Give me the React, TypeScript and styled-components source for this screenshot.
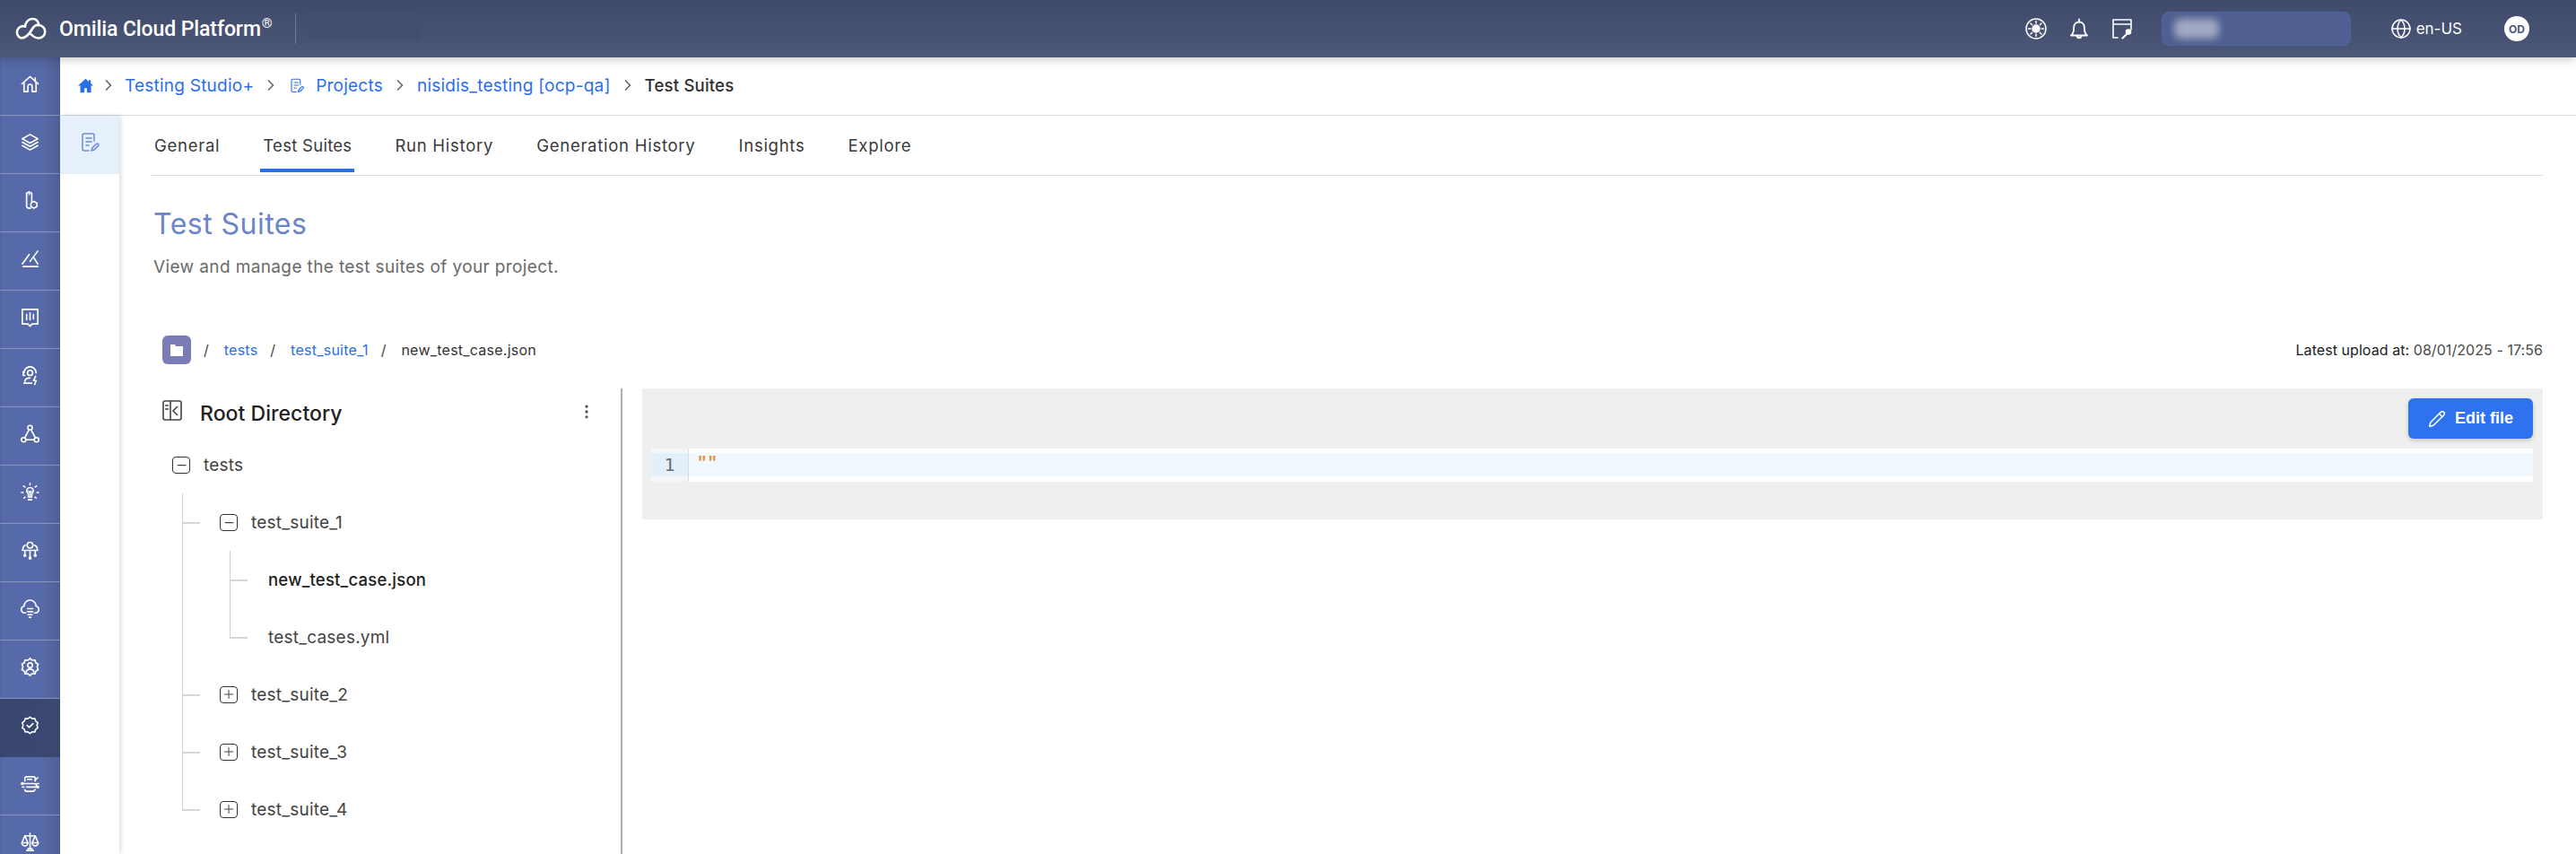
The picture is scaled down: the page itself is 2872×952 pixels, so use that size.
import React from 'react';
import styled, { createGlobalStyle } from 'styled-components';
import { ChevronRight, Globe, Pencil, MoreVertical, Minus, Plus } from 'lucide-react';

const Global = createGlobalStyle`
  * { box-sizing: border-box; }
  html, body { margin: 0; padding: 0; height: 100%; background: #fff; }
  body { font-family: Inter, "Open Sans", sans-serif; color: #333; }
  #root { height: 100%; }
`;

const Shell = styled.div`
  height: 100vh; display: flex; flex-direction: column; overflow: hidden;
`;
const TopBar = styled.header`
  height: 64px; flex: none; display: flex; align-items: center; position: relative; z-index: 3;
  background: linear-gradient(180deg, #404a6a 0%, #4c5779 100%);
  box-shadow: 0 2px 10px rgba(0,0,0,.22);
  color: #fff;
`;
const Logo = styled.svg`
  width: 38px; height: 26px; margin-left: 15px; flex: none;
`;
const Brand = styled.div`
  margin-left: 13px; font-family: Roboto, sans-serif; font-weight: 500; font-size: 23px; letter-spacing: -.1px; white-space: nowrap; color: #fff;
  sup { font-size: 15px; font-weight: 400; line-height: 0; vertical-align: 9px; margin-left: 1px; }
`;
const BrandDivider = styled.div`
  width: 1px; height: 34px; background: #6f7ba6; margin-left: 25px; flex: none;
`;
const BlurredTenant = styled.div`
  width: 124px; height: 34px; margin-left: 15px; margin-top: -10px; background: #434e71; filter: blur(1px);
`;
const TopActions = styled.div`
  margin-left: auto; display: flex; align-items: center; padding-right: 52px;
`;
const TopIcon = styled.span`
  width: 24px; height: 24px; display: flex; align-items: center; justify-content: center; margin-right: 24px;
  svg { display: block; }
`;
const Search = styled.div`
  width: 211px; height: 38px; border-radius: 8px; background: #4f5f91; border: 1px solid #4d64a2; margin-left: 8px; padding: 6px 13px; flex: none; overflow: hidden;
`;
const BlurBlob = styled.div`
  width: 50px; height: 22px; margin-top: 1px; background: #a3a9c2; border-radius: 8px; filter: blur(4px);
`;
const Lang = styled.div`
  display: flex; align-items: center; gap: 5px; margin-left: 44px; font-size: 17px; color: #fff;
`;
const Avatar = styled.div`
  width: 28px; height: 28px; border-radius: 50%; background: #fff; color: #4c5779; font-size: 12px; font-weight: 700; display: flex; align-items: center; justify-content: center; margin-left: 47px; flex: none;
`;
const Body = styled.div`
  flex: 1; min-height: 0; display: flex;
`;
const SideBar = styled.nav`
  width: 67px; flex: none; background: linear-gradient(90deg, #4d629c 0, #5669a8 3%, #5669a8 72%, #505e94 100%); overflow: hidden;
`;
const NavItem = styled.div<{ $active?: boolean }>`
  height: 65px; display: flex; align-items: center; justify-content: center; padding-bottom: 6px;
  border-bottom: 1px solid ${p => (p.$active ? '#384670' : 'rgba(255,255,255,.3)')};
  background: ${p => (p.$active ? 'linear-gradient(90deg,#37456f,#3a4872)' : 'transparent')};
  svg { width: 23px; height: 23px; fill: none; stroke: #fff; stroke-width: 1.7; stroke-linecap: round; stroke-linejoin: round; }
`;
const Main = styled.div`
  flex: 1; min-width: 0; display: flex; flex-direction: column;
`;
const Crumbs = styled.div`
  height: 65px; flex: none; display: flex; align-items: center; border-bottom: 1px solid #d9d9d9; padding-left: 20px; font-size: 19px; color: #2b6fe8; padding-bottom: 2px; white-space: nowrap;
`;
const CrumbLink = styled.span`
  font-weight: 400; letter-spacing: .012em; color: #2b6fe8;
`;
const CrumbCurrent = styled.span`
  font-weight: 500; color: #2f2f2f; font-size: 18.5px; letter-spacing: .012em;
`;
const CrumbSep = styled.span<{ $first?: boolean }>`
  display: flex; color: #666; margin: 0 ${p => (p.$first ? 8 : 9)}px 0 ${p => (p.$first ? 7 : 9)}px;
`;
const CrumbDoc = styled.svg`
  width: 18px; height: 22px; margin-right: 12px; margin-left: 1px; fill: none; stroke: #2b6fe8; stroke-width: 1.5; stroke-linecap: round; stroke-linejoin: round;
`;
const Work = styled.div`
  flex: 1; min-height: 0; display: flex;
`;
const SubNav = styled.aside`
  width: 66px; flex: none; position: relative; z-index: 1; background: #fff; box-shadow: 2px 0 5px rgba(0,0,0,.13);
`;
const SubNavItem = styled.div`
  height: 65px; background: #e6f0fb; border-bottom: 1px solid #e4ecf6; display: flex; align-items: center; justify-content: center; padding-bottom: 6px;
`;
const SubIcon = styled.svg`
  width: 24px; height: 24px; fill: none; stroke: #6d8ad4; stroke-width: 1.5; stroke-linecap: round; stroke-linejoin: round;
`;
const Content = styled.main`
  flex: 1; min-width: 0; padding: 0 37px 0 38px; display: flex; flex-direction: column;
`;
const Tabs = styled.div`
  height: 67px; flex: none; display: flex; gap: 42px; border-bottom: 1px solid #dedede; padding-bottom: 3px; padding-left: 0; margin-left: -2px;
`;
const Tab = styled.div<{ $active?: boolean }>`
  height: 100%; padding: 6px 3px 0; display: flex; align-items: center; font-size: 18.5px; color: #3a3a3a; white-space: nowrap;
  letter-spacing: ${p => (p.$active ? '.015em' : '.04em')};
  border-bottom: 4px solid ${p => (p.$active ? '#2b6fe8' : 'transparent')};
`;
const Title = styled.h1`
  margin: 34px 0 0; font-size: 32px; line-height: 40px; font-weight: 400; color: #6b85c8; letter-spacing: .015em;
`;
const Subtitle = styled.p`
  margin: 16px 0 0; font-size: 19px; line-height: 24px; color: #6a6a6a; letter-spacing: .02em;
`;
const PathRow = styled.div`
  margin: 64px 0 0; padding-left: 10px; height: 32px; flex: none; display: flex; align-items: center; font-size: 16px; white-space: nowrap;
`;
const FolderBtn = styled.div`
  width: 32px; height: 32px; border-radius: 6px; background: #7b7bb5; display: flex; align-items: center; justify-content: center; flex: none;
`;
const PathSlash = styled.span`
  margin: 0 17px 0 14px; color: #444;
`;
const PathLink = styled.span`
  color: #2b6fe8; letter-spacing: .015em;
`;
const PathCurrent = styled.span`
  color: #333; letter-spacing: .015em;
`;
const Upload = styled.div`
  margin-left: auto; font-size: 16px; color: #1c1c1c; letter-spacing: .004em;
  span { color: #4a4a4a; }
`;
const Split = styled.div`
  flex: 1; min-height: 0; margin-top: 27px; display: flex;
`;
const TreePane = styled.section`
  width: 523px; flex: none; border-right: 2px solid #adadad; padding-left: 10px;
`;
const TreeHead = styled.div`
  height: 53px; display: flex; align-items: flex-start; padding-top: 12px;
`;
const PanelIcon = styled.svg`
  width: 22px; height: 23px; flex: none; margin-top: 1px; fill: none; stroke: #444; stroke-width: 1.6;
`;
const RootTitle = styled.div`
  margin-left: 20px; margin-top: 2px; font-size: 23px; font-weight: 500; color: #222; letter-spacing: .002em;
`;
const Kebab = styled.span`
  margin-left: auto; margin-right: 28px; margin-top: 4px; color: #555; display: flex;
`;
const Tree = styled.ul`
  list-style: none; margin: 0; padding: 0 0 0 11px;
`;
const Branch = styled.ul<{ $leaf?: boolean }>`
  list-style: none; margin: 0 0 0 11px; padding: 0 0 0 ${p => (p.$leaf ? 43 : 42)}px;
`;
const Node = styled.li<{ $connected?: boolean }>`
  position: relative;
  ${p => p.$connected ? `
    &::before { content: ''; position: absolute; left: -42px; top: 32px; width: 20px; height: 2px; background: #d6d6d6; }
    &::after { content: ''; position: absolute; left: -42px; top: 0; bottom: 0; width: 1px; background: #cfcfcf; }
    &:last-child::after { bottom: auto; height: 34px; }
  ` : ''}
`;
const LeafNode = styled.li`
  position: relative;
  &::before { content: ''; position: absolute; left: -43px; top: 32px; width: 20px; height: 2px; background: #d6d6d6; }
  &::after { content: ''; position: absolute; left: -43px; top: 0; bottom: 0; width: 1px; background: #cfcfcf; }
  &:last-child::after { bottom: auto; height: 34px; }
`;
const Row = styled.div`
  height: 64px; display: flex; align-items: center; gap: 15px;
`;
const Toggle = styled.span`
  width: 20px; height: 19px; border: 1px solid #333; border-radius: 4px; display: flex; align-items: center; justify-content: center; flex: none; color: #444;
`;
const NodeLabel = styled.span<{ $strong?: boolean }>`
  font-size: ${p => (p.$strong ? 18.5 : 19)}px; color: ${p => (p.$strong ? '#222' : '#444')}; font-weight: ${p => (p.$strong ? 500 : 400)}; letter-spacing: .012em;
`;
const EditorPane = styled.section`
  flex: 1; min-width: 0; margin-left: 22px; height: 146px; background: #efefef; padding: 11px 11px 0 10px; display: flex; flex-direction: column;
`;
const EditBar = styled.div`
  display: flex; justify-content: flex-end; height: 56px; flex: none;
`;
const EditBtn = styled.button`
  width: 139px; height: 45px; border: 0; border-radius: 6px; background: #2e72f0; color: #fff; font-family: "Liberation Sans", Arial, sans-serif; font-weight: 700; font-size: 18px; display: flex; align-items: center; justify-content: center; gap: 10px; box-shadow: 0 2px 5px rgba(0,0,0,.18);
`;
const Code = styled.div`
  height: 37px; display: flex; background: #fff;
`;
const Gutter = styled.div`
  width: 42px; flex: none; background: #f5f5f5; border-right: 1px solid #dcdcdc; padding: 5px 0;
`;
const GutterNum = styled.div`
  height: 26px; line-height: 26px; background: #e3f0fc; color: #6b6b6b; font-family: "DejaVu Sans Mono", monospace; font-size: 20px; text-align: center;
`;
const CodeArea = styled.div`
  flex: 1; padding: 5px 0;
`;
const CodeLine = styled.div`
  height: 26px; line-height: 22px; background: #f1f8fe; color: #e5923a; font-family: "Liberation Mono", monospace; font-weight: 700; font-size: 19px; padding-left: 9px;
`;

const icons: React.ReactNode[] = [
  <><path d="M2.5 12 12 3.500 21.500 12" /><path d="M18 5v4" /><path d="M5 10.500V21h4.500v-6a2.500 2.500 0 0 1 5 0v6H19V10.500" /></>,
  <><path d="M12 3 21 8l-9 5-9-5z" /><path d="m3 12 9 5 9-5" /><path d="m3 16 9 5 9-5" /></>,
  <><path d="M8 3.500 11 2l3 1.500V13" /><path d="M8 3.500V18a3 3 0 0 0 3 3h1.500" /><path d="M11 2v3" /><path d="m16.500 13 3.500 2v4l-3.500 2-3.500-2v-4z" /></>,
  <><path d="M3 18 11 7" /><path d="M21 3 12 15" /><path d="m16 10 5 8" /><path d="M4 21h17" /></>,
  <><path d="M3 3h18v17h-6.500L12 22.500 9.500 20H3z" /><path d="M8 9v6M12 7v8M16 9v5" /></>,
  <><path d="M5 9a7 7 0 0 1 14 0" /><circle cx="12" cy="9" r="3" /><path d="M4 8v4h2M6 19c0-3 3-4 6-4M5 21h9" /><path d="m18.500 13-2.500 5h3l-1.500 4.500" /></>,
  <><circle cx="12" cy="5" r="2.600" /><circle cx="4.500" cy="19" r="2.600" /><circle cx="19.500" cy="19" r="2.600" /><path d="M10.800 7.500 5.800 16.700M13.200 7.500l5 9.200M7 19h10" /></>,
  <><path d="M8.500 12a3.800 3.800 0 1 1 7 0c-.6 1-1.500 1.600-1.500 3v3h-4v-3c0-1.400-.9-2-1.500-3z" /><path d="M10 21h4M12 18v-5l-1.500-2M12 13l1.500-2" /><path d="M12 2v1.500M4.500 5 6 6.200M19.500 5 18 6.200M2 12.500h2M20 12.500h2M5 19l1.200-1.200M19 19l-1.200-1.200" /></>,
  <><circle cx="12" cy="6" r="3.400" /><path d="M6.500 6c-2 1-3 3-3 5M17.500 6c2 1 3 3 3 5M3 12h18" /><path d="M6 12v5M12 12v8M18 12v5" /><circle cx="6" cy="18" r="1" /><circle cx="12" cy="21" r="1" /><circle cx="18" cy="18" r="1" /></>,
  <><path d="M7 17H6a4 4 0 0 1-1-7.900 7 7 0 0 1 14 0A4 4 0 0 1 18 17h-1" /><path d="M9 12h6M9 15.500h6M9.500 19h5M11 22h2" /></>,
  <><path d="m12 2 2.500 2.200 3.300-.3.800 3.200 2.900 1.700-1.300 3.200 1.300 3.200-2.900 1.700-.8 3.200-3.300-.3L12 22l-2.500-2.200-3.300.3-.8-3.200-2.900-1.700L3.800 12l-1.300-3.200 2.900-1.700.8-3.200 3.300.3z" /><circle cx="12" cy="10" r="2.800" /><path d="M7.500 18c.5-2.500 2.500-3.500 4.500-3.500s4 1 4.500 3.500" /></>,
  <><path d="m12 2.500 2.500 1.800 3.100-.1 1 3 2.400 1.900-1 2.900 1 2.900-2.400 1.900-1 3-3.100-.1L12 21.500l-2.500-1.800-3.100.1-1-3-2.400-1.900 1-2.900-1-2.900 2.400-1.900 1-3 3.100.1z" /><path d="m8.500 12 2.500 2.500 4.500-4.500" /></>,
  <><path d="M6 9V6a2 2 0 0 1 2-2h8a2 2 0 0 1 2 2v3" /><path d="M9 7h5M3 12h14a2.500 2.500 0 0 1 2.500 2.500V16H8" /><path d="M21 5l-3 3M3 16h2M6 19a2 2 0 0 0 2 2h8l2-2M22 12h-2" /><circle cx="3" cy="12" r="1" /><circle cx="21" cy="16" r="1" /></>,
  <><path d="M12 2v18M6 5h12M8 22h8M9.500 20h5" /><path d="m6 5-3.500 8h7zM18 5l-3.500 8h7z" /><path d="M2.500 13a3.500 3.500 0 0 0 7 0M14.500 13a3.500 3.500 0 0 0 7 0" /></>,
];

const DocPen = () => (
  <>
    <path d="M17 11V5a2 2 0 0 0-2-2H6a2 2 0 0 0-2 2v15a2 2 0 0 0 2 2h5" />
    <path d="M8 8h6M8 12h6M8 16h3" />
    <path d="m14 22 .8-3 4.700-4.700a1.500 1.500 0 0 1 2.100 2.100L17 21z" />
  </>
);

const Expander = ({ open }: { open?: boolean }) => (
  <Toggle>{open ? <Minus size={15} strokeWidth={2} /> : <Plus size={16} strokeWidth={1.5} />}</Toggle>
);

export default function App() {
  return (
    <Shell>
      <Global />
      <TopBar>
        <Logo viewBox="0 0 38 26" fill="none" stroke="#fff" strokeWidth="2.600" strokeLinecap="round" strokeLinejoin="round">
          <path d="M13 10.500A6.800 6.800 0 1 0 8.500 23.500c6 0 9.500-5 12-9.500 2-3.500 4.500-5.500 7.500-5a7.200 7.200 0 0 1 0 14.500c-4.500 0-7.500-3-10-6" />
          <path d="M13 10.500C13.500 5.500 17 2 21 2c3.800 0 6.800 2.700 7.500 7" />
        </Logo>
        <Brand>Omilia Cloud Platform<sup>®</sup></Brand>
        <BrandDivider />
        <BlurredTenant />
        <TopActions>
          <TopIcon>
            <svg width="24" height="24" viewBox="0 0 24 24" fill="none" stroke="#fff" strokeWidth="1.500" strokeLinecap="round">
              <circle cx="12" cy="12" r="11" />
              <circle cx="12" cy="12" r="4" fill="#fff" />
              <path d="M12 3.500v2.500M12 18v2.500M3.500 12H6M18 12h2.500M6 6l1.700 1.700M16.300 16.300 18 18M18 6l-1.700 1.700M7.700 16.300 6 18" />
            </svg>
          </TopIcon>
          <TopIcon>
            <svg width="24" height="24" viewBox="0 0 24 24" fill="none" stroke="#fff" strokeWidth="1.800" strokeLinecap="round" strokeLinejoin="round">
              <path d="M3 19.500c2-1.500 3.200-3.500 3.200-9 0-3.500 2.500-6 5.800-6s5.800 2.500 5.800 6c0 5.500 1.200 7.500 3.200 9z" />
              <path d="M12 1.500v3" />
              <path d="M9.500 20.500a2.600 2.600 0 0 0 5 0" fill="#fff" />
            </svg>
          </TopIcon>
          <TopIcon>
            <svg width="24" height="24" viewBox="0 0 24 24" fill="none" stroke="#fff" strokeWidth="1.600" strokeLinecap="round" strokeLinejoin="round">
              <path d="M2 22V2h20v11M2 7h20M2 22h5" />
              <circle cx="19" cy="15.500" r="2.500" fill="#fff" />
              <path d="m17.500 17.500-5 5" strokeWidth="2.200" />
            </svg>
          </TopIcon>
          <Search><BlurBlob /></Search>
          <Lang><Globe size={24} color="#fff" strokeWidth={1.500} />en-US</Lang>
          <Avatar>OD</Avatar>
        </TopActions>
      </TopBar>
      <Body>
        <SideBar>
          {icons.map((icon, i) => (
            <NavItem key={i} $active={i === 11}>
              <svg viewBox="0 0 24 24">{icon}</svg>
            </NavItem>
          ))}
        </SideBar>
        <Main>
          <Crumbs>
            <svg width="17" height="17" viewBox="0 0 24 24" fill="#2b6fe8"><path d="M12 1 0 12h3.500v11H10v-7h4v7h6.500V12H24l-4-3.700V3h-3v2.500z" /></svg>
            <CrumbSep $first><ChevronRight size={20} strokeWidth={2} /></CrumbSep>
            <CrumbLink>Testing Studio+</CrumbLink>
            <CrumbSep><ChevronRight size={20} strokeWidth={2} /></CrumbSep>
            <CrumbDoc viewBox="0 0 24 24"><DocPen /></CrumbDoc>
            <CrumbLink>Projects</CrumbLink>
            <CrumbSep><ChevronRight size={20} strokeWidth={2} /></CrumbSep>
            <CrumbLink>nisidis_testing [ocp-qa]</CrumbLink>
            <CrumbSep><ChevronRight size={20} strokeWidth={2} /></CrumbSep>
            <CrumbCurrent>Test Suites</CrumbCurrent>
          </Crumbs>
          <Work>
            <SubNav>
              <SubNavItem><SubIcon viewBox="0 0 24 24"><DocPen /></SubIcon></SubNavItem>
            </SubNav>
            <Content>
              <Tabs>
                <Tab>General</Tab>
                <Tab $active>Test Suites</Tab>
                <Tab>Run History</Tab>
                <Tab>Generation History</Tab>
                <Tab>Insights</Tab>
                <Tab>Explore</Tab>
              </Tabs>
              <Title>Test Suites</Title>
              <Subtitle>View and manage the test suites of your project.</Subtitle>
              <PathRow>
                <FolderBtn>
                  <svg width="16" height="16" viewBox="0 0 16 16" fill="#fff"><path d="M1 2h5l1 2h8v11H1z" /></svg>
                </FolderBtn>
                <PathSlash>/</PathSlash>
                <PathLink>tests</PathLink>
                <PathSlash>/</PathSlash>
                <PathLink>test_suite_1</PathLink>
                <PathSlash>/</PathSlash>
                <PathCurrent>new_test_case.json</PathCurrent>
                <Upload>Latest upload at: <span>08/01/2025 - 17:56</span></Upload>
              </PathRow>
              <Split>
                <TreePane>
                  <TreeHead>
                    <PanelIcon viewBox="0 0 22 23">
                      <rect x="1" y="1" width="20" height="21" rx="2" />
                      <path d="M9 1v21M3 6h4M3 10h4M17 7l-5 5 5 5" />
                    </PanelIcon>
                    <RootTitle>Root Directory</RootTitle>
                    <Kebab><MoreVertical size={20} strokeWidth={2} /></Kebab>
                  </TreeHead>
                  <Tree>
                    <Node>
                      <Row><Expander open /><NodeLabel>tests</NodeLabel></Row>
                      <Branch>
                        <Node $connected>
                          <Row><Expander open /><NodeLabel>test_suite_1</NodeLabel></Row>
                          <Branch $leaf>
                            <LeafNode><Row><NodeLabel $strong>new_test_case.json</NodeLabel></Row></LeafNode>
                            <LeafNode><Row><NodeLabel>test_cases.yml</NodeLabel></Row></LeafNode>
                          </Branch>
                        </Node>
                        <Node $connected><Row><Expander /><NodeLabel>test_suite_2</NodeLabel></Row></Node>
                        <Node $connected><Row><Expander /><NodeLabel>test_suite_3</NodeLabel></Row></Node>
                        <Node $connected><Row><Expander /><NodeLabel>test_suite_4</NodeLabel></Row></Node>
                      </Branch>
                    </Node>
                  </Tree>
                </TreePane>
                <EditorPane>
                  <EditBar>
                    <EditBtn><Pencil size={20} strokeWidth={1.800} />Edit file</EditBtn>
                  </EditBar>
                  <Code>
                    <Gutter><GutterNum>1</GutterNum></Gutter>
                    <CodeArea><CodeLine>""</CodeLine></CodeArea>
                  </Code>
                </EditorPane>
              </Split>
            </Content>
          </Work>
        </Main>
      </Body>
    </Shell>
  );
}
